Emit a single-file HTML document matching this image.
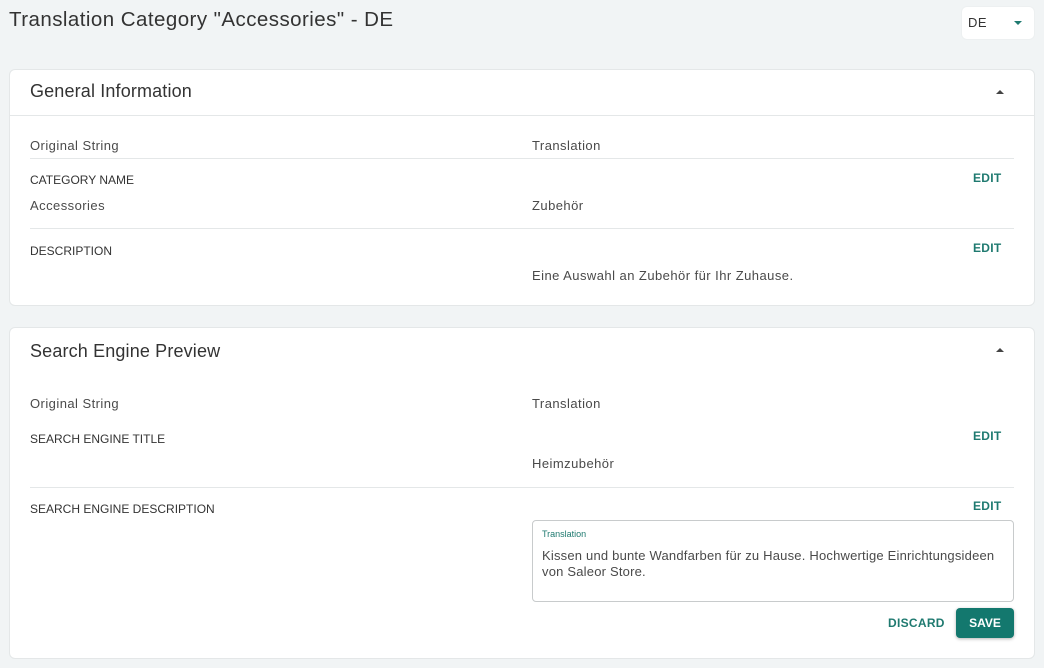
<!DOCTYPE html>
<html><head><meta charset="utf-8"><style>
*{margin:0;padding:0;box-sizing:border-box}
body{width:1044px;height:668px;background:#f1f4f5;font-family:"Liberation Sans",sans-serif;position:relative;overflow:hidden;color:#3a3a3a}
.a{position:absolute;white-space:nowrap}
.card{position:absolute;left:9px;width:1026px;background:#fff;border:1px solid #e4e7e8;border-radius:6px}
.h{font-size:18px;color:#333;letter-spacing:.15px}
.t{font-size:13px;color:#4a4a4a;letter-spacing:.45px}
.l{font-size:12px;color:#333}
.e{font-size:12px;font-weight:bold;color:#1f7a70;letter-spacing:.3px}
.hr{position:absolute;left:30px;width:984px;height:1px;background:#e4e7e8}
.up{width:0;height:0;border-left:4px solid transparent;border-right:4px solid transparent;border-bottom:4px solid #444}
</style></head><body>
<div class="a" style="left:9px;top:8px;font-size:20.5px;letter-spacing:.45px;color:#333">Translation Category "Accessories" - DE</div>
<div class="a" style="left:961px;top:6px;width:74px;height:34px;background:#fff;border-radius:6px;border:1px solid #edf0f1"></div>
<div class="a t" style="left:968px;top:15px;color:#333">DE</div>
<div class="a" style="left:1014px;top:21px;width:0;height:0;border-left:4px solid transparent;border-right:4px solid transparent;border-top:4px solid #1f7a70"></div>

<div class="card" style="top:69px;height:237px"></div>
<div class="a h" style="left:30px;top:81px">General Information</div>
<div class="a up" style="left:996px;top:90px"></div>
<div class="a" style="left:10px;top:115px;width:1024px;height:1px;background:#e4e7e8"></div>
<div class="a t" style="left:30px;top:138px">Original String</div>
<div class="a t" style="left:532px;top:138px">Translation</div>
<div class="hr" style="top:158px"></div>
<div class="a l" style="left:30px;top:173px">CATEGORY NAME</div>
<div class="a e" style="left:973px;top:171px">EDIT</div>
<div class="a t" style="left:30px;top:198px">Accessories</div>
<div class="a t" style="left:532px;top:198px">Zubehör</div>
<div class="hr" style="top:228px"></div>
<div class="a l" style="left:30px;top:244px">DESCRIPTION</div>
<div class="a e" style="left:973px;top:241px">EDIT</div>
<div class="a t" style="left:532px;top:268px">Eine Auswahl an Zubehör für Ihr Zuhause.</div>

<div class="card" style="top:327px;height:332px"></div>
<div class="a h" style="left:30px;top:341px">Search Engine Preview</div>
<div class="a up" style="left:996px;top:348px"></div>
<div class="a t" style="left:30px;top:396px">Original String</div>
<div class="a t" style="left:532px;top:396px">Translation</div>
<div class="a l" style="left:30px;top:432px">SEARCH ENGINE TITLE</div>
<div class="a e" style="left:973px;top:429px">EDIT</div>
<div class="a t" style="left:532px;top:456px">Heimzubehör</div>
<div class="hr" style="top:487px"></div>
<div class="a l" style="left:30px;top:502px">SEARCH ENGINE DESCRIPTION</div>
<div class="a e" style="left:973px;top:499px">EDIT</div>
<div class="a" style="left:532px;top:520px;width:482px;height:82px;border:1px solid #c8cbcc;border-radius:4px"></div>
<div class="a" style="left:542px;top:529px;font-size:9px;color:#1f7a70">Translation</div>
<div class="a t" style="left:542px;top:548px;line-height:16px;white-space:normal;width:455px;letter-spacing:.2px">Kissen und bunte Wandfarben für zu Hause. Hochwertige Einrichtungsideen von Saleor Store.</div>
<div class="a e" style="left:888px;top:616px">DISCARD</div>
<div class="a" style="left:956px;top:608px;width:58px;height:30px;background:#13786e;border-radius:4px;box-shadow:0 1px 3px rgba(0,0,0,.3);color:#fff;font-size:12px;font-weight:bold;text-align:center;line-height:30px">SAVE</div>
</body></html>
